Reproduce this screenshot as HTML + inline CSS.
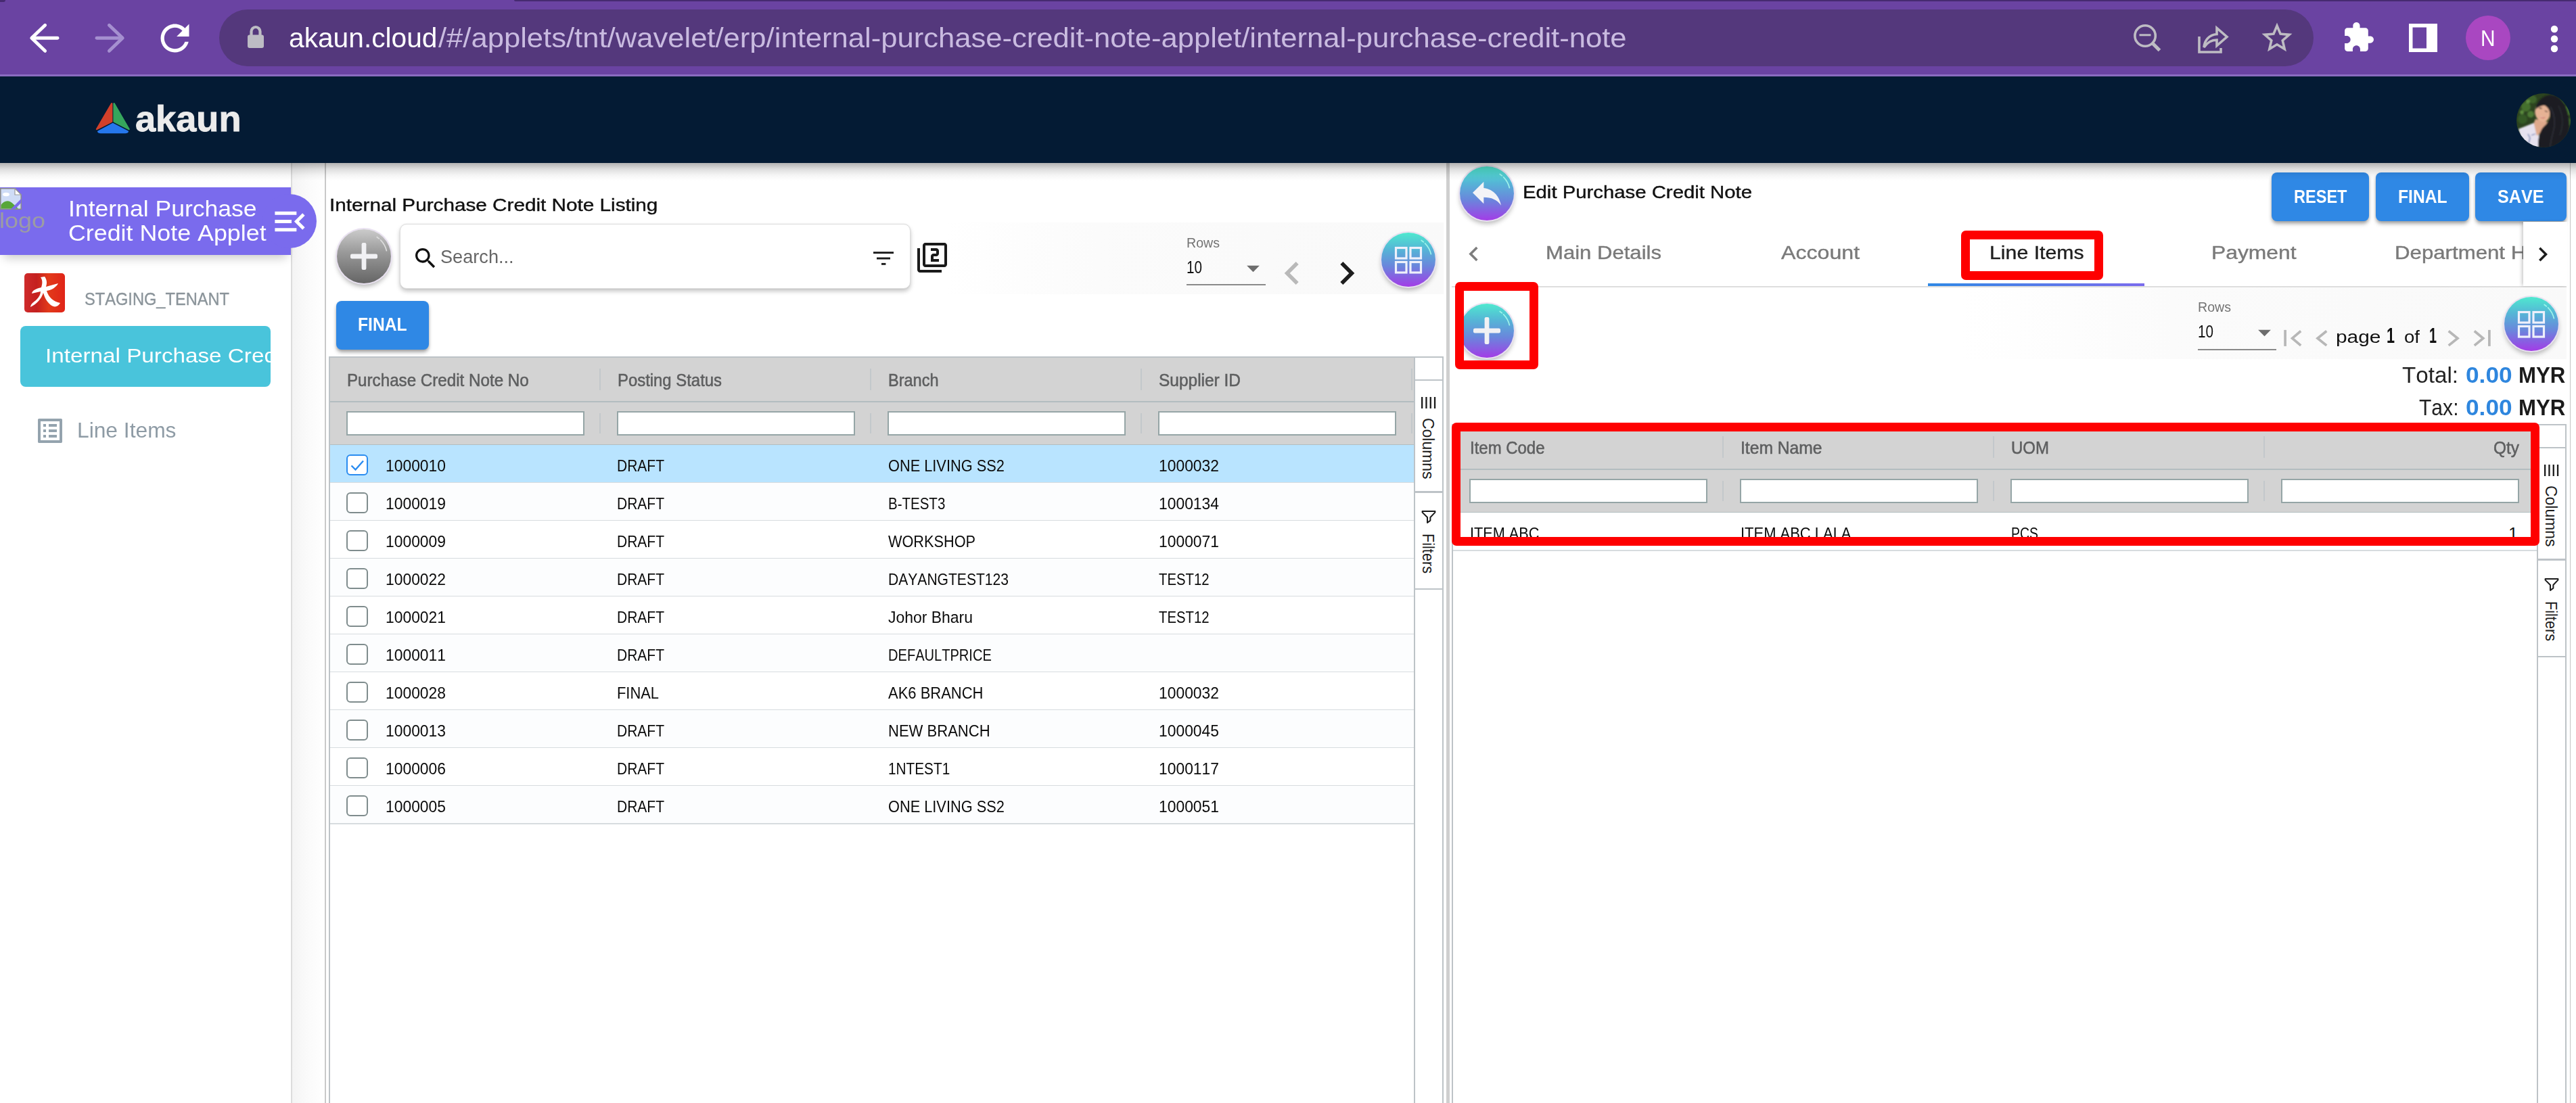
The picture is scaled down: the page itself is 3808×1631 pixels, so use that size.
<!DOCTYPE html>
<html lang="en">
<head>
<meta charset="utf-8">
<title>Internal Purchase Credit Note Applet</title>
<style>
html,body{margin:0;padding:0;background:#fff;}
body{width:3808px;height:1631px;overflow:hidden;font-family:"Liberation Sans",sans-serif;}
#root{position:relative;width:3808px;height:1631px;overflow:hidden;background:#fff;}
#root div,#root svg,#root span.t{position:absolute;box-sizing:border-box;}
span.t{white-space:nowrap;line-height:normal;font-kerning:none;}
.btn{background:#2f88e5;border-radius:8px;box-shadow:0 5px 6px -1px rgba(0,0,0,.28),0 2px 4px rgba(0,0,0,.18);}
.fab{border-radius:50%;background:linear-gradient(180deg,#4fe9cf 0%,#55b6d6 30%,#6a86dc 62%,#a33ce7 100%);box-shadow:0 0 0 2px #e9e1f1,0 5px 7px rgba(0,0,0,.28);}
.fabg{border-radius:50%;background:linear-gradient(180deg,#cbcbcb 0%,#9a9a9a 42%,#656565 100%);box-shadow:0 0 0 2px #e9e1f1,0 5px 7px rgba(0,0,0,.28);}
.hdr{background:#d3d3d3;}
.fin{background:#fff;border:2px solid #95a5a6;}
.cb{border:2px solid #7f8c8d;border-radius:6px;background:#fff;}
.ln{background:#d7dcdf;}
.red{border:13px solid #fe0000;border-radius:7px;}
</style>
</head>
<body>
<div id="root">
<div style="left:0px;top:0px;width:3808px;height:113px;background:#6a43a2;"></div>
<div style="left:760px;top:0px;width:3048px;height:2px;background:#462a70;border-radius:0 0 0 3px;"></div>
<div style="left:0px;top:0px;width:8px;height:3px;background:#462a70;border-radius:0 0 8px 0;"></div>
<div style="left:0px;top:110px;width:3808px;height:3px;background:#8b6cc1;"></div>
<div style="left:324px;top:14px;width:3096px;height:84px;background:#54387c;border-radius:42px;"></div>
<svg style="left:40px;top:30px;" width="52" height="52" viewBox="0 0 52 52"><g fill="none" stroke="#fff" stroke-width="4.900" stroke-linecap="round" stroke-linejoin="round"><path d="M7.600 26.300H45"/><path d="M26.600 7.300L6.800 26.300L26.600 45.300"/></g></svg>
<svg style="left:136px;top:30px;" width="52" height="52" viewBox="0 0 52 52"><g fill="none" stroke="#a58fd0" stroke-width="4.900" stroke-linecap="round" stroke-linejoin="round"><path d="M7 26.300H44.400"/><path d="M25.400 7.300L45.200 26.300L25.400 45.300"/></g></svg>
<svg style="left:227.0px;top:24.5px;" width="63" height="63" viewBox="0 0 24 24"><path d="M17.65 6.35C16.2 4.9 14.21 4 12 4c-4.42 0-7.99 3.58-7.99 8s3.57 8 7.99 8c3.73 0 6.84-2.55 7.73-6h-2.08c-.82 2.33-3.04 4-5.65 4-3.31 0-6-2.69-6-6s2.69-6 6-6c1.66 0 3.14.69 4.22 1.78L13 11h7V4l-2.35 2.35z" fill="#fff" /></svg>
<svg style="left:362px;top:34px;" width="32" height="40" viewBox="0 0 32 40"><path d="M9.5 19V12.5a6.5 6.5 0 0 1 13 0V19" fill="none" stroke="#bdbcc4" stroke-width="4.2"/><rect x="4" y="17.5" width="24" height="19.5" rx="3" fill="#bdbcc4"/></svg>
<span id="url1" class="t" style="font-size:41.5px;color:#fff;font-weight:400;left:427px;top:31.96px;transform-origin:0 50%;transform:scaleX(0.9807);">akaun.cloud</span>
<span id="url2" class="t" style="font-size:41.5px;color:#c9bbe0;font-weight:400;left:647.5px;top:31.96px;transform-origin:0 50%;transform:scaleX(1.0503);">/#/applets/tnt/wavelet/erp/internal-purchase-credit-note-applet/internal-purchase-credit-note</span>
<svg style="left:3150px;top:32px;" width="48" height="48" viewBox="0 0 48 48"><g fill="none" stroke="#bebcc3"><circle cx="21.100" cy="21" r="15.200" stroke-width="3.600"/><path d="M32.500 32.500L42.500 42.500" stroke-width="5.200"/><path d="M12.500 19.800H29.500" stroke-width="3"/></g></svg>
<svg style="left:3246px;top:32px;" width="52" height="48" viewBox="0 0 52 48"><path d="M5 22V45H37V39" fill="none" stroke="#bebcc3" stroke-width="3.6"/><path d="M12 38C13 27 20 19.5 31 18.5V9.5L46 22.5 31 35.5V27C23 27 17 30.5 12 38Z" fill="none" stroke="#bebcc3" stroke-width="3.6" stroke-linejoin="miter"/></svg>
<svg style="left:3338.5px;top:29.0px;" width="54" height="54" viewBox="0 0 24 24"><path d="M22 9.24l-7.19-.62L12 2 9.19 8.63 2 9.24l5.46 4.73L5.82 21 12 17.27 18.18 21l-1.63-7.03L22 9.24zM12 15.4l-3.76 2.27 1-4.28-3.32-2.88 4.38-.38L12 6.1l1.71 4.04 4.38.38-3.32 2.88 1 4.28L12 15.4z" fill="#bebcc3" /></svg>
<svg style="left:3462.0px;top:30.5px;" width="49" height="49" viewBox="0 0 24 24"><path d="M20.5 11H19V7c0-1.1-.9-2-2-2h-4V3.5C13 2.12 11.88 1 10.5 1S8 2.12 8 3.5V5H4c-1.1 0-1.99.9-1.99 2v3.8H3.5c1.49 0 2.7 1.21 2.7 2.7s-1.21 2.7-2.7 2.7H2V20c0 1.1.9 2 2 2h3.8v-1.5c0-1.49 1.21-2.7 2.7-2.7 1.49 0 2.7 1.21 2.7 2.7V22H17c1.1 0 2-.9 2-2v-4h1.5c1.38 0 2.5-1.12 2.5-2.5S21.88 11 20.5 11z" fill="#fff" /></svg>
<svg style="left:3560px;top:34px;" width="44" height="44" viewBox="0 0 44 44"><path d="M1 1H43V43H1Z M6.500 6.500V37.500H27V6.500Z" fill="#fff" fill-rule="evenodd"/></svg>
<div style="left:3645px;top:23px;width:66px;height:66px;background:#a947c1;border-radius:50%;"></div>
<span id="navN" class="t" style="font-size:33px;color:#fff;font-weight:400;left:3667px;top:37.59px;transform-origin:0 50%;transform:scaleX(0.9059);">N</span>
<svg style="left:3768px;top:36px;" width="16" height="44" viewBox="0 0 16 44"><circle cx="8" cy="7" r="5.200" fill="#fff"/><circle cx="8" cy="21.500" r="5.200" fill="#fff"/><circle cx="8" cy="36" r="5.200" fill="#fff"/></svg>
<div style="left:430px;top:241px;width:51px;height:1390px;background:linear-gradient(90deg,#f3f3f3 0%,#fafafa 45%,#ffffff 100%);"></div>
<div style="left:430px;top:241px;width:1.5px;height:1390px;background:#dcdcdc;"></div>
<div style="left:480px;top:241px;width:2px;height:1390px;background:#c9c9c9;"></div>
<div style="left:0px;top:277px;width:430px;height:100px;background:#7a6bed;box-shadow:0 10px 14px -6px rgba(0,0,0,.22);"></div>
<div style="left:388px;top:287px;width:80px;height:80px;background:#7a6bed;border-radius:50%;"></div>
<svg style="left:0px;top:277.5px;" width="32" height="32" viewBox="0 0 32 32"><path d="M0.800 0.800H22L31.200 10V31.200H0.800Z" fill="#cfdcf6" stroke="#8b8b8b" stroke-width="1.6"/><path d="M22 0.800V10H31.200Z" fill="#fff" stroke="#9a9a9a" stroke-width="1.200"/><ellipse cx="9" cy="9.500" rx="5" ry="2.800" fill="#fff"/><path d="M1.600 30.400V25C6 18 14 17 20 24L27 30.400Z" fill="#57a639"/><path d="M31.200 16L16 31.200H22L31.200 22Z" fill="#7a6bed"/></svg>
<span id="logo" class="t" style="font-size:31.5px;color:#9c9ca3;font-weight:400;left:-1px;top:308.47px;transform-origin:0 50%;transform:scaleX(1.1417);">logo</span>
<span id="ban1" class="t" style="font-size:33px;color:#fff;font-weight:400;left:100.6px;top:289.59px;transform-origin:0 50%;transform:scaleX(1.0771);">Internal Purchase</span>
<span id="ban2" class="t" style="font-size:33px;color:#fff;font-weight:400;left:100.6px;top:325.59px;transform-origin:0 50%;transform:scaleX(1.0851);">Credit Note Applet</span>
<svg style="left:398.5px;top:298.2px;" width="59" height="59" viewBox="0 0 24 24"><path d="M3 18h13v-2H3v2zm0-5h10v-2H3v2zm0-7v2h13V6H3zm18 9.59L17.42 12 21 8.41 19.59 7l-5 5 5 5L21 15.59z" fill="#fff" /></svg>
<svg style="left:36px;top:404px;" width="60" height="58" viewBox="0 0 60 58"><defs><linearGradient id="tg" x1="0" x2="1" y1="0" y2="0"><stop offset="0" stop-color="#cf2b2b"/><stop offset="0.300" stop-color="#c4201f"/><stop offset="0.600" stop-color="#e23a1a"/><stop offset="1" stop-color="#e02418"/></linearGradient></defs><rect x="0" y="0" width="60" height="58" rx="5" fill="url(#tg)"/><path d="M30 5C33 9 34 14 32 20L50 15C47 21 40 25 33 26C36 36 43 42 53 44C50 50 44 51 39 47C33 42 30 36 28 29C25 38 19 45 9 50C10 44 14 43 18 39C22 35 24 31 24 27L11 30C12 25 17 23 25 21C27 15 27 10 24 6Z" fill="#fff"/></svg>
<span id="tenant" class="t" style="font-size:25.5px;color:#8b949a;font-weight:400;-webkit-text-stroke:0.35px #8b949a;left:124.5px;top:427.5px;transform-origin:0 50%;transform:scaleX(0.9266);">STAGING_TENANT</span>
<div style="left:30px;top:482px;width:370px;height:90px;overflow:hidden;border-radius:8px;background:#49c4db;">
<span id="menu1" class="t" style="font-size:29.5px;color:#fff;font-weight:400;left:36.6px;top:27.22px;transform-origin:0 50%;transform:scaleX(1.1271);">Internal Purchase Credit Note</span>
</div>
<svg style="left:50.0px;top:612.8px;" width="48" height="48" viewBox="0 0 24 24"><path d="M19 5v14H5V5h14m1.1-2H3.9c-.5 0-.9.4-.9.9v16.2c0 .4.4.9.9.9h16.2c.4 0 .9-.5.9-.9V3.9c0-.5-.5-.9-.9-.9zM11 7h6v2h-6V7zm0 4h6v2h-6v-2zm0 4h6v2h-6zM7 7h2v2H7zm0 4h2v2H7zm0 4h2v2H7z" fill="#94a3ae" /></svg>
<span id="menu2" class="t" style="font-size:30.5px;color:#8e9ba5;font-weight:400;left:114px;top:619.29px;transform-origin:0 50%;transform:scaleX(1.0411);">Line Items</span>
<span id="ttl1" class="t" style="font-size:26px;color:#111;font-weight:400;-webkit-text-stroke:0.4px #111;left:486.8px;top:287.94px;transform-origin:0 50%;transform:scaleX(1.1424);">Internal Purchase Credit Note Listing</span>
<div style="left:1400px;top:329px;width:734px;height:106px;background:linear-gradient(90deg,#ffffff 0%,#fbfbfb 30%,#f9f9f9 100%);"></div>
<div class="fabg" style="left:498px;top:339px;width:80px;height:80px;"></div>
<svg style="left:498px;top:339px;" width="80" height="80" viewBox="0 0 80 80"><rect x="20" y="36.600" width="40" height="6.800" rx="2.200" fill="#f1f1f4"/><rect x="36.600" y="20" width="6.800" height="40" rx="2.200" fill="#f1f1f4"/><path d="M59.200 11.500A34.400 34.400 0 0 1 73.400 31.700" fill="none" stroke="#dcdcdc" stroke-width="1.700" stroke-linecap="round" stroke-dasharray="4 3 100"/></svg>
<div style="left:591px;top:330.5px;width:755px;height:96.5px;background:#fff;border:1.5px solid #dedede;border-radius:10px;box-shadow:0 4px 6px rgba(0,0,0,.22),0 0 2px rgba(0,0,0,.10);"></div>
<svg style="left:608.5px;top:362.3px;" width="40" height="40" viewBox="0 0 24 24"><path d="M15.5 14h-.79l-.28-.27C15.41 12.59 16 11.11 16 9.5 16 5.91 13.09 3 9.5 3S3 5.91 3 9.5 5.91 16 9.5 16c1.61 0 3.09-.59 4.23-1.57l.27.28v.79l5 4.99L20.49 19l-4.99-5zm-6 0C7.01 14 5 11.99 5 9.5S7.01 5 9.5 5 14 7.01 14 9.5 11.99 14 9.5 14z" fill="#111" /></svg>
<span id="srch" class="t" style="font-size:27.5px;color:#666;font-weight:400;left:651px;top:363.86px;transform-origin:0 50%;transform:scaleX(0.9867);">Search...</span>
<svg style="left:1291px;top:371px;" width="31" height="22" viewBox="0 0 31 22"><g fill="#1a1a1a"><rect x="0" y="1.200" width="30" height="2.900"/><rect x="5" y="9.600" width="20" height="2.900"/><rect x="12" y="17.900" width="6.400" height="2.900"/></g></svg>
<svg style="left:1354.0px;top:357.0px;" width="48" height="48" viewBox="0 0 24 24"><path d="M3 5H1v16c0 1.1.9 2 2 2h16v-2H3V5zm18-4H7c-1.1 0-2 .9-2 2v14c0 1.1.9 2 2 2h14c1.1 0 2-.9 2-2V3c0-1.1-.9-2-2-2zm0 16H7V3h14v14zm-4-4h-4v-2h2c1.1 0 2-.89 2-2V7c0-1.11-.9-2-2-2h-4v2h4v2h-2c-1.1 0-2 .89-2 2v4h6v-2z" fill="#1a1a1a" /></svg>
<span id="rows1" class="t" style="font-size:20px;color:#737373;font-weight:400;left:1754.4px;top:347.87px;transform-origin:0 50%;transform:scaleX(0.9797);">Rows</span>
<span id="ten1" class="t" style="font-size:26px;color:#111;font-weight:400;left:1754.4px;top:380.04px;transform-origin:0 50%;transform:scaleX(0.7952);">10</span>
<svg style="left:1829.8px;top:373.5px;" width="45" height="45" viewBox="0 0 24 24"><path d="M7 10l5 5 5-5z" fill="#6d6d6d" /></svg>
<div style="left:1754px;top:420px;width:116.5px;height:2px;background:#8a8a8a;"></div>
<svg style="left:1875.5px;top:370.0px;" width="68" height="68" viewBox="0 0 24 24"><path d="M15.41 7.41L14 6l-6 6 6 6 1.41-1.41L10.83 12z" fill="#b9b9b9" /></svg>
<svg style="left:1956.5px;top:370.0px;" width="68" height="68" viewBox="0 0 24 24"><path d="M10 6L8.59 7.41 13.17 12l-4.58 4.59L10 18l6-6z" fill="#1d1d1d" /></svg>
<div class="fab" style="left:2042px;top:344px;width:80px;height:80px;"></div>
<svg style="left:2042px;top:344px;" width="80" height="80" viewBox="0 0 80 80"><g fill="none" stroke="#eef0fb" stroke-width="3.200"><rect x="21.500" y="22.500" width="15.500" height="15.500"/><rect x="43" y="22.500" width="15.500" height="15.500"/><rect x="21.500" y="43.500" width="15.500" height="15.500"/><rect x="43" y="43.500" width="15.500" height="15.500"/></g><path d="M59.200 11.500A34.400 34.400 0 0 1 73.400 31.700" fill="none" stroke="#9ff3ea" stroke-width="1.700" stroke-linecap="round" stroke-dasharray="4 3 100"/></svg>
<div class="btn" style="left:496.5px;top:445px;width:137.5px;height:71.5px;"></div>
<span id="fin1" class="t" style="font-size:27.5px;color:#fff;font-weight:700;left:529px;top:464.46px;transform-origin:0 50%;transform:scaleX(0.8966);">FINAL</span>
<div style="left:486px;top:527px;width:1647.5px;height:1110px;border:2px solid #bdc3c7;background:#fff;"></div>
<div class="hdr" style="left:488px;top:529px;width:1602px;height:129px;"></div>
<div style="left:488px;top:592.5px;width:1602px;height:2px;background:#b3bdc0;"></div>
<div style="left:488px;top:656.5px;width:1602px;height:2px;background:#b3bdc0;"></div>
<span id="h1_0" class="t" style="font-size:25px;color:#5e5f60;font-weight:400;-webkit-text-stroke:0.55px #5e5f60;left:512.6px;top:547.96px;transform-origin:0 50%;transform:scaleX(0.9669);">Purchase Credit Note No</span>
<div class="fin" style="left:512px;top:608px;width:352px;height:35.5px;"></div>
<div style="left:886px;top:545px;width:2px;height:32px;background:#c3c8cb;"></div>
<div style="left:886px;top:611px;width:2px;height:30px;background:#c3c8cb;"></div>
<span id="h1_1" class="t" style="font-size:25px;color:#5e5f60;font-weight:400;-webkit-text-stroke:0.55px #5e5f60;left:912.6px;top:547.96px;transform-origin:0 50%;transform:scaleX(0.9552);">Posting Status</span>
<div class="fin" style="left:912px;top:608px;width:352px;height:35.5px;"></div>
<div style="left:1286px;top:545px;width:2px;height:32px;background:#c3c8cb;"></div>
<div style="left:1286px;top:611px;width:2px;height:30px;background:#c3c8cb;"></div>
<span id="h1_2" class="t" style="font-size:25px;color:#5e5f60;font-weight:400;-webkit-text-stroke:0.55px #5e5f60;left:1312.6px;top:547.96px;transform-origin:0 50%;transform:scaleX(0.9404);">Branch</span>
<div class="fin" style="left:1312px;top:608px;width:352px;height:35.5px;"></div>
<div style="left:1686px;top:545px;width:2px;height:32px;background:#c3c8cb;"></div>
<div style="left:1686px;top:611px;width:2px;height:30px;background:#c3c8cb;"></div>
<span id="h1_3" class="t" style="font-size:25px;color:#5e5f60;font-weight:400;-webkit-text-stroke:0.55px #5e5f60;left:1712.6px;top:547.96px;transform-origin:0 50%;transform:scaleX(0.9784);">Supplier ID</span>
<div class="fin" style="left:1712px;top:608px;width:352px;height:35.5px;"></div>
<div style="left:2086px;top:545px;width:2px;height:32px;background:#c3c8cb;"></div>
<div style="left:2086px;top:611px;width:2px;height:30px;background:#c3c8cb;"></div>
<div style="left:488px;top:658px;width:1602px;height:56px;background:#b9e4ff;"></div>
<div class="ln" style="left:488px;top:713px;width:1602px;height:2px;"></div>
<div style="left:512px;top:671.5px;width:32px;height:31.5px;border:2px solid #2a8cf0;border-radius:6px;background:#fff;"></div>
<svg style="left:512px;top:671.5px;" width="32" height="32" viewBox="0 0 32 32"><path d="M7.500 16.500L13.500 22.500L25 9.500" fill="none" stroke="#2a8cf0" stroke-width="2.400"/></svg>
<span id="r0a" class="t" style="font-size:24.5px;color:#0b0b0b;font-weight:400;left:569.5px;top:674.62px;transform-origin:0 50%;transform:scaleX(0.9330);">1000010</span>
<span id="r0b" class="t" style="font-size:24.5px;color:#0b0b0b;font-weight:400;left:912.4px;top:674.62px;transform-origin:0 50%;transform:scaleX(0.8571);">DRAFT</span>
<span id="r0c" class="t" style="font-size:24.5px;color:#0b0b0b;font-weight:400;left:1312.7px;top:674.62px;transform-origin:0 50%;transform:scaleX(0.8885);">ONE LIVING SS2</span>
<span id="r0d" class="t" style="font-size:24.5px;color:#0b0b0b;font-weight:400;left:1712.7px;top:674.62px;transform-origin:0 50%;transform:scaleX(0.9330);">1000032</span>
<div style="left:488px;top:714px;width:1602px;height:56px;background:#fcfdfe;"></div>
<div class="ln" style="left:488px;top:769px;width:1602px;height:2px;"></div>
<div class="cb" style="left:512px;top:727.5px;width:32px;height:31.5px;"></div>
<span id="r1a" class="t" style="font-size:24.5px;color:#0b0b0b;font-weight:400;left:569.5px;top:730.62px;transform-origin:0 50%;transform:scaleX(0.9330);">1000019</span>
<span id="r1b" class="t" style="font-size:24.5px;color:#0b0b0b;font-weight:400;left:912.4px;top:730.62px;transform-origin:0 50%;transform:scaleX(0.8571);">DRAFT</span>
<span id="r1c" class="t" style="font-size:24.5px;color:#0b0b0b;font-weight:400;left:1312.7px;top:730.62px;transform-origin:0 50%;transform:scaleX(0.8367);">B-TEST3</span>
<span id="r1d" class="t" style="font-size:24.5px;color:#0b0b0b;font-weight:400;left:1712.7px;top:730.62px;transform-origin:0 50%;transform:scaleX(0.9330);">1000134</span>
<div style="left:488px;top:770px;width:1602px;height:56px;background:#ffffff;"></div>
<div class="ln" style="left:488px;top:825px;width:1602px;height:2px;"></div>
<div class="cb" style="left:512px;top:783.5px;width:32px;height:31.5px;"></div>
<span id="r2a" class="t" style="font-size:24.5px;color:#0b0b0b;font-weight:400;left:569.5px;top:786.62px;transform-origin:0 50%;transform:scaleX(0.9330);">1000009</span>
<span id="r2b" class="t" style="font-size:24.5px;color:#0b0b0b;font-weight:400;left:912.4px;top:786.62px;transform-origin:0 50%;transform:scaleX(0.8571);">DRAFT</span>
<span id="r2c" class="t" style="font-size:24.5px;color:#0b0b0b;font-weight:400;left:1312.7px;top:786.62px;transform-origin:0 50%;transform:scaleX(0.8856);">WORKSHOP</span>
<span id="r2d" class="t" style="font-size:24.5px;color:#0b0b0b;font-weight:400;left:1712.7px;top:786.62px;transform-origin:0 50%;transform:scaleX(0.9330);">1000071</span>
<div style="left:488px;top:826px;width:1602px;height:56px;background:#fcfdfe;"></div>
<div class="ln" style="left:488px;top:881px;width:1602px;height:2px;"></div>
<div class="cb" style="left:512px;top:839.5px;width:32px;height:31.5px;"></div>
<span id="r3a" class="t" style="font-size:24.5px;color:#0b0b0b;font-weight:400;left:569.5px;top:842.62px;transform-origin:0 50%;transform:scaleX(0.9330);">1000022</span>
<span id="r3b" class="t" style="font-size:24.5px;color:#0b0b0b;font-weight:400;left:912.4px;top:842.62px;transform-origin:0 50%;transform:scaleX(0.8571);">DRAFT</span>
<span id="r3c" class="t" style="font-size:24.5px;color:#0b0b0b;font-weight:400;left:1312.7px;top:842.62px;transform-origin:0 50%;transform:scaleX(0.8600);">DAYANGTEST123</span>
<span id="r3d" class="t" style="font-size:24.5px;color:#0b0b0b;font-weight:400;left:1712.7px;top:842.62px;transform-origin:0 50%;transform:scaleX(0.8300);">TEST12</span>
<div style="left:488px;top:882px;width:1602px;height:56px;background:#ffffff;"></div>
<div class="ln" style="left:488px;top:937px;width:1602px;height:2px;"></div>
<div class="cb" style="left:512px;top:895.5px;width:32px;height:31.5px;"></div>
<span id="r4a" class="t" style="font-size:24.5px;color:#0b0b0b;font-weight:400;left:569.5px;top:898.62px;transform-origin:0 50%;transform:scaleX(0.9330);">1000021</span>
<span id="r4b" class="t" style="font-size:24.5px;color:#0b0b0b;font-weight:400;left:912.4px;top:898.62px;transform-origin:0 50%;transform:scaleX(0.8571);">DRAFT</span>
<span id="r4c" class="t" style="font-size:24.5px;color:#0b0b0b;font-weight:400;left:1312.7px;top:898.62px;transform-origin:0 50%;transform:scaleX(0.9364);">Johor Bharu</span>
<span id="r4d" class="t" style="font-size:24.5px;color:#0b0b0b;font-weight:400;left:1712.7px;top:898.62px;transform-origin:0 50%;transform:scaleX(0.8300);">TEST12</span>
<div style="left:488px;top:938px;width:1602px;height:56px;background:#fcfdfe;"></div>
<div class="ln" style="left:488px;top:993px;width:1602px;height:2px;"></div>
<div class="cb" style="left:512px;top:951.5px;width:32px;height:31.5px;"></div>
<span id="r5a" class="t" style="font-size:24.5px;color:#0b0b0b;font-weight:400;left:569.5px;top:954.62px;transform-origin:0 50%;transform:scaleX(0.9330);">1000011</span>
<span id="r5b" class="t" style="font-size:24.5px;color:#0b0b0b;font-weight:400;left:912.4px;top:954.62px;transform-origin:0 50%;transform:scaleX(0.8571);">DRAFT</span>
<span id="r5c" class="t" style="font-size:24.5px;color:#0b0b0b;font-weight:400;left:1312.7px;top:954.62px;transform-origin:0 50%;transform:scaleX(0.8192);">DEFAULTPRICE</span>
<div style="left:488px;top:994px;width:1602px;height:56px;background:#ffffff;"></div>
<div class="ln" style="left:488px;top:1049px;width:1602px;height:2px;"></div>
<div class="cb" style="left:512px;top:1007.5px;width:32px;height:31.5px;"></div>
<span id="r6a" class="t" style="font-size:24.5px;color:#0b0b0b;font-weight:400;left:569.5px;top:1010.62px;transform-origin:0 50%;transform:scaleX(0.9330);">1000028</span>
<span id="r6b" class="t" style="font-size:24.5px;color:#0b0b0b;font-weight:400;left:912.4px;top:1010.62px;transform-origin:0 50%;transform:scaleX(0.8929);">FINAL</span>
<span id="r6c" class="t" style="font-size:24.5px;color:#0b0b0b;font-weight:400;left:1312.7px;top:1010.62px;transform-origin:0 50%;transform:scaleX(0.8973);">AK6 BRANCH</span>
<span id="r6d" class="t" style="font-size:24.5px;color:#0b0b0b;font-weight:400;left:1712.7px;top:1010.62px;transform-origin:0 50%;transform:scaleX(0.9330);">1000032</span>
<div style="left:488px;top:1050px;width:1602px;height:56px;background:#fcfdfe;"></div>
<div class="ln" style="left:488px;top:1105px;width:1602px;height:2px;"></div>
<div class="cb" style="left:512px;top:1063.5px;width:32px;height:31.5px;"></div>
<span id="r7a" class="t" style="font-size:24.5px;color:#0b0b0b;font-weight:400;left:569.5px;top:1066.62px;transform-origin:0 50%;transform:scaleX(0.9330);">1000013</span>
<span id="r7b" class="t" style="font-size:24.5px;color:#0b0b0b;font-weight:400;left:912.4px;top:1066.62px;transform-origin:0 50%;transform:scaleX(0.8571);">DRAFT</span>
<span id="r7c" class="t" style="font-size:24.5px;color:#0b0b0b;font-weight:400;left:1312.7px;top:1066.62px;transform-origin:0 50%;transform:scaleX(0.8995);">NEW BRANCH</span>
<span id="r7d" class="t" style="font-size:24.5px;color:#0b0b0b;font-weight:400;left:1712.7px;top:1066.62px;transform-origin:0 50%;transform:scaleX(0.9330);">1000045</span>
<div style="left:488px;top:1106px;width:1602px;height:56px;background:#ffffff;"></div>
<div class="ln" style="left:488px;top:1161px;width:1602px;height:2px;"></div>
<div class="cb" style="left:512px;top:1119.5px;width:32px;height:31.5px;"></div>
<span id="r8a" class="t" style="font-size:24.5px;color:#0b0b0b;font-weight:400;left:569.5px;top:1122.62px;transform-origin:0 50%;transform:scaleX(0.9330);">1000006</span>
<span id="r8b" class="t" style="font-size:24.5px;color:#0b0b0b;font-weight:400;left:912.4px;top:1122.62px;transform-origin:0 50%;transform:scaleX(0.8571);">DRAFT</span>
<span id="r8c" class="t" style="font-size:24.5px;color:#0b0b0b;font-weight:400;left:1312.7px;top:1122.62px;transform-origin:0 50%;transform:scaleX(0.8479);">1NTEST1</span>
<span id="r8d" class="t" style="font-size:24.5px;color:#0b0b0b;font-weight:400;left:1712.7px;top:1122.62px;transform-origin:0 50%;transform:scaleX(0.9330);">1000117</span>
<div style="left:488px;top:1162px;width:1602px;height:56px;background:#fcfdfe;"></div>
<div class="ln" style="left:488px;top:1217px;width:1602px;height:2px;"></div>
<div class="cb" style="left:512px;top:1175.5px;width:32px;height:31.5px;"></div>
<span id="r9a" class="t" style="font-size:24.5px;color:#0b0b0b;font-weight:400;left:569.5px;top:1178.62px;transform-origin:0 50%;transform:scaleX(0.9330);">1000005</span>
<span id="r9b" class="t" style="font-size:24.5px;color:#0b0b0b;font-weight:400;left:912.4px;top:1178.62px;transform-origin:0 50%;transform:scaleX(0.8571);">DRAFT</span>
<span id="r9c" class="t" style="font-size:24.5px;color:#0b0b0b;font-weight:400;left:1312.7px;top:1178.62px;transform-origin:0 50%;transform:scaleX(0.8885);">ONE LIVING SS2</span>
<span id="r9d" class="t" style="font-size:24.5px;color:#0b0b0b;font-weight:400;left:1712.7px;top:1178.62px;transform-origin:0 50%;transform:scaleX(0.9330);">1000051</span>
<div style="left:2090px;top:528px;width:2px;height:1103px;background:#bdc3c7;"></div>
<div style="left:2092px;top:561px;width:40px;height:2px;background:#bdc3c7;"></div>
<div style="left:2092px;top:726px;width:40px;height:3px;background:#bdc3c7;"></div>
<div style="left:2092px;top:870px;width:40px;height:2px;background:#bdc3c7;"></div>
<svg style="left:2101px;top:587px;" width="22" height="18" viewBox="0 0 22 18"><g fill="#1b1b1b"><rect x="0" y="0" width="2.300" height="17"/><rect x="6.300" y="0" width="2.300" height="17"/><rect x="12.600" y="0" width="2.300" height="17"/><rect x="18.900" y="0" width="2.300" height="17"/></g></svg>
<svg style="left:2101px;top:754px;" width="22" height="21" viewBox="0 0 22 21"><path d="M1.600 2H20.400V3.600L13.400 11V15.600L9 19V11L1.600 3.600Z" fill="none" stroke="#1b1b1b" stroke-width="2" stroke-linejoin="round"/></svg>
<span id="sc1" class="t" style="font-size:24.4px;color:#1b1b1b;font-weight:400;left:2096px;top:618px;transform-origin:0 0;transform:translate(28.5px,0) rotate(90deg) scaleX(0.9413);">Columns</span>
<span id="sf1" class="t" style="font-size:24.4px;color:#1b1b1b;font-weight:400;left:2096px;top:789px;transform-origin:0 0;transform:translate(28.5px,0) rotate(90deg) scaleX(0.8885);">Filters</span>
<div style="left:2137.5px;top:241px;width:5px;height:1390px;background:#cfcfcf;"></div>
<div class="fab" style="left:2158px;top:245.5px;width:80px;height:80px;"></div>
<svg style="left:2170.0px;top:256.5px;" width="56" height="56" viewBox="0 0 24 24"><path d="M10 9V5l-7 7 7 7v-4.1c5 0 8.5 1.6 11 5.1-1-5-4-10-11-11z" fill="#f3f3f7" /></svg>
<svg style="left:2158px;top:245.5px;" width="80" height="80" viewBox="0 0 80 80"><path d="M59.200 11.500A34.400 34.400 0 0 1 73.400 31.700" fill="none" stroke="#9ff3ea" stroke-width="1.700" stroke-linecap="round" stroke-dasharray="4 3 100"/></svg>
<span id="ttl2" class="t" style="font-size:26px;color:#111;font-weight:400;-webkit-text-stroke:0.4px #111;left:2250.7px;top:268.74px;transform-origin:0 50%;transform:scaleX(1.1278);">Edit Purchase Credit Note</span>
<div class="btn" style="left:3358px;top:255px;width:144px;height:72px;"></div>
<div class="btn" style="left:3512px;top:255px;width:138px;height:72px;"></div>
<div class="btn" style="left:3659px;top:255px;width:135px;height:72px;"></div>
<span id="bReset" class="t" style="font-size:27.5px;color:#fff;font-weight:700;left:3390.5px;top:274.66px;transform-origin:0 50%;transform:scaleX(0.8562);">RESET</span>
<span id="bFinal" class="t" style="font-size:27.5px;color:#fff;font-weight:700;left:3544.5px;top:274.66px;transform-origin:0 50%;transform:scaleX(0.8966);">FINAL</span>
<span id="bSave" class="t" style="font-size:27.5px;color:#fff;font-weight:700;left:3691.5px;top:274.66px;transform-origin:0 50%;transform:scaleX(0.9147);">SAVE</span>
<div style="left:2146px;top:422.5px;width:1648px;height:2px;background:#dedede;"></div>
<svg style="left:2157.0px;top:353.7px;" width="43" height="43" viewBox="0 0 24 24"><path d="M15.41 7.41L14 6l-6 6 6 6 1.41-1.41L10.83 12z" fill="#7d7d7d" /></svg>
<span id="tab1" class="t" style="font-size:27.5px;color:#7a7a7a;font-weight:400;-webkit-text-stroke:0.4px #7a7a7a;left:2284.7px;top:358.16px;transform-origin:0 50%;transform:scaleX(1.1301);">Main Details</span>
<span id="tab2" class="t" style="font-size:27.5px;color:#7a7a7a;font-weight:400;-webkit-text-stroke:0.4px #7a7a7a;left:2632.5px;top:358.16px;transform-origin:0 50%;transform:scaleX(1.1693);">Account</span>
<span id="tab3" class="t" style="font-size:27.5px;color:#1f1f1f;font-weight:400;-webkit-text-stroke:0.35px #1f1f1f;left:2941px;top:358.16px;transform-origin:0 50%;transform:scaleX(1.1011);">Line Items</span>
<span id="tab4" class="t" style="font-size:27.5px;color:#7a7a7a;font-weight:400;-webkit-text-stroke:0.4px #7a7a7a;left:3268.5px;top:358.16px;transform-origin:0 50%;transform:scaleX(1.1564);">Payment</span>
<div style="left:3490px;top:330px;width:240px;height:90px;overflow:hidden;">
<span id="tab5" class="t" style="font-size:27.5px;color:#7a7a7a;font-weight:400;-webkit-text-stroke:0.4px #7a7a7a;left:50px;top:28.16px;transform-origin:0 50%;transform:scaleX(1.1347);">Department Hdr</span>
</div>
<div style="left:2850px;top:418.8px;width:320px;height:4.1px;background:linear-gradient(90deg,#2f88e5 0%,#5b78ea 60%,#7a6bed 100%);"></div>
<div style="left:3729.5px;top:328px;width:65px;height:95px;background:#fff;box-shadow:-3px 0 5px -1px rgba(0,0,0,.22);"></div>
<svg style="left:3738.0px;top:354.5px;" width="42" height="42" viewBox="0 0 24 24"><path d="M10 6L8.59 7.41 13.17 12l-4.58 4.59L10 18l6-6z" fill="#1d1d1d" /></svg>
<div class="red" style="left:2899px;top:341px;width:210px;height:72.8px;"></div>
<div style="left:2900px;top:425px;width:894px;height:106px;background:linear-gradient(90deg,#ffffff 0%,#fbfbfb 35%,#f9f9f9 100%);"></div>
<div class="fab" style="left:2158px;top:449px;width:80px;height:80px;"></div>
<svg style="left:2158px;top:449px;" width="80" height="80" viewBox="0 0 80 80"><rect x="20" y="36.600" width="40" height="6.800" rx="2.200" fill="#f1f1f4"/><rect x="36.600" y="20" width="6.800" height="40" rx="2.200" fill="#f1f1f4"/><path d="M59.200 11.500A34.400 34.400 0 0 1 73.400 31.700" fill="none" stroke="#9ff3ea" stroke-width="1.700" stroke-linecap="round" stroke-dasharray="4 3 100"/></svg>
<div class="red" style="left:2151px;top:417px;width:123px;height:129px;"></div>
<span id="rows2" class="t" style="font-size:20px;color:#737373;font-weight:400;left:3249.4px;top:442.87px;transform-origin:0 50%;transform:scaleX(0.9797);">Rows</span>
<span id="ten2" class="t" style="font-size:26px;color:#111;font-weight:400;left:3249.4px;top:475.04px;transform-origin:0 50%;transform:scaleX(0.7952);">10</span>
<svg style="left:3324.8px;top:469.0px;" width="45" height="45" viewBox="0 0 24 24"><path d="M7 10l5 5 5-5z" fill="#6d6d6d" /></svg>
<div style="left:3249px;top:515.5px;width:116px;height:2px;background:#8a8a8a;"></div>
<svg style="left:3372px;top:484px;" width="320" height="32" viewBox="0 0 320 32"><g fill="none" stroke="#b7b7b7" stroke-width="3.700"><path d="M6.100 3.900V27.900"/><path d="M29.200 5.500L16.600 16.200L29.200 26.900"/><path d="M67.300 5.500L54 16.200L67.300 26.900"/><path d="M247.700 5.500L261 16.200L247.700 26.900"/><path d="M285.800 5.500L298.800 16.200L285.800 26.900"/><path d="M307.900 3.900V27.900"/></g></svg>
<span id="pg1" class="t" style="font-size:26.5px;color:#111;font-weight:400;left:3453.4px;top:482.88px;transform-origin:0 50%;transform:scaleX(1.1280);">page</span>
<span id="pg2" class="t" style="font-size:31px;color:#111;font-weight:700;left:3528px;top:478.73px;transform-origin:0 50%;transform:scaleX(0.6957);">1</span>
<span id="pg3" class="t" style="font-size:26.5px;color:#111;font-weight:400;left:3554px;top:482.88px;transform-origin:0 50%;transform:scaleX(1.0403);">of</span>
<span id="pg4" class="t" style="font-size:31px;color:#111;font-weight:700;left:3590.5px;top:478.73px;transform-origin:0 50%;transform:scaleX(0.6377);">1</span>
<div class="fab" style="left:3702px;top:439px;width:80px;height:80px;"></div>
<svg style="left:3702px;top:439px;" width="80" height="80" viewBox="0 0 80 80"><g fill="none" stroke="#eef0fb" stroke-width="3.200"><rect x="21.500" y="22.500" width="15.500" height="15.500"/><rect x="43" y="22.500" width="15.500" height="15.500"/><rect x="21.500" y="43.500" width="15.500" height="15.500"/><rect x="43" y="43.500" width="15.500" height="15.500"/></g><path d="M59.200 11.500A34.400 34.400 0 0 1 73.400 31.700" fill="none" stroke="#9ff3ea" stroke-width="1.700" stroke-linecap="round" stroke-dasharray="4 3 100"/></svg>
<span id="tot1" class="t" style="font-size:33px;color:#222;font-weight:400;left:3551px;top:535.59px;transform-origin:0 50%;transform:scaleX(1.0055);">Total:</span>
<span id="tot2" class="t" style="font-size:33px;color:#2e86de;font-weight:700;left:3645px;top:535.59px;transform-origin:0 50%;transform:scaleX(1.0680);">0.00</span>
<span id="tot3" class="t" style="font-size:33px;color:#1b1b1b;font-weight:700;left:3722.7px;top:535.59px;transform-origin:0 50%;transform:scaleX(0.9449);">MYR</span>
<span id="tax1" class="t" style="font-size:33px;color:#222;font-weight:400;left:3575.5px;top:583.59px;transform-origin:0 50%;transform:scaleX(0.9114);">Tax:</span>
<span id="tax2" class="t" style="font-size:33px;color:#2e86de;font-weight:700;left:3645px;top:583.59px;transform-origin:0 50%;transform:scaleX(1.0680);">0.00</span>
<span id="tax3" class="t" style="font-size:33px;color:#1b1b1b;font-weight:700;left:3722.7px;top:583.59px;transform-origin:0 50%;transform:scaleX(0.9449);">MYR</span>
<div style="left:2146px;top:627px;width:1647.5px;height:1010px;border:2px solid #bdc3c7;background:#fff;"></div>
<div class="hdr" style="left:2148px;top:629px;width:1602px;height:129px;"></div>
<div style="left:2148px;top:692.5px;width:1602px;height:2px;background:#b3bdc0;"></div>
<div style="left:2148px;top:756.5px;width:1602px;height:2px;background:#b3bdc0;"></div>
<span id="h2_0" class="t" style="font-size:25px;color:#5e5f60;font-weight:400;-webkit-text-stroke:0.55px #5e5f60;left:2172.6px;top:647.96px;transform-origin:0 50%;transform:scaleX(0.9580);">Item Code</span>
<div class="fin" style="left:2172px;top:708px;width:352px;height:35.5px;"></div>
<div style="left:2546px;top:645px;width:2px;height:32px;background:#c3c8cb;"></div>
<div style="left:2546px;top:711px;width:2px;height:30px;background:#c3c8cb;"></div>
<span id="h2_1" class="t" style="font-size:25px;color:#5e5f60;font-weight:400;-webkit-text-stroke:0.55px #5e5f60;left:2572.6px;top:647.96px;transform-origin:0 50%;transform:scaleX(0.9856);">Item Name</span>
<div class="fin" style="left:2572px;top:708px;width:352px;height:35.5px;"></div>
<div style="left:2946px;top:645px;width:2px;height:32px;background:#c3c8cb;"></div>
<div style="left:2946px;top:711px;width:2px;height:30px;background:#c3c8cb;"></div>
<span id="h2_2" class="t" style="font-size:25px;color:#5e5f60;font-weight:400;-webkit-text-stroke:0.55px #5e5f60;left:2972.6px;top:647.96px;transform-origin:0 50%;transform:scaleX(0.9601);">UOM</span>
<div class="fin" style="left:2972px;top:708px;width:352px;height:35.5px;"></div>
<div style="left:3346px;top:645px;width:2px;height:32px;background:#c3c8cb;"></div>
<div style="left:3346px;top:711px;width:2px;height:30px;background:#c3c8cb;"></div>
<span id="h2_3" class="t" style="font-size:25px;color:#5e5f60;font-weight:400;-webkit-text-stroke:0.55px #5e5f60;right:84.30px;top:647.96px;transform-origin:100% 50%;transform:scaleX(0.9767);">Qty</span>
<div class="fin" style="left:3372px;top:708px;width:352px;height:35.5px;"></div>
<div style="left:2148px;top:758px;width:1602px;height:56px;background:#fff;"></div>
<div class="ln" style="left:2148px;top:813px;width:1602px;height:2px;"></div>
<span id="i0" class="t" style="font-size:24.5px;color:#0b0b0b;font-weight:400;left:2172.6px;top:774.62px;transform-origin:0 50%;transform:scaleX(0.8858);">ITEM ABC</span>
<span id="i1" class="t" style="font-size:24.5px;color:#0b0b0b;font-weight:400;left:2572.6px;top:774.62px;transform-origin:0 50%;transform:scaleX(0.8961);">ITEM ABC LALA</span>
<span id="i2" class="t" style="font-size:24.5px;color:#0b0b0b;font-weight:400;left:2972.6px;top:774.62px;transform-origin:0 50%;transform:scaleX(0.7938);">PCS</span>
<span id="i3" class="t" style="font-size:24.5px;color:#0b0b0b;font-weight:400;right:86.00px;top:774.62px;transform-origin:100% 50%;">1</span>
<div style="left:3750px;top:628px;width:2px;height:1003px;background:#bdc3c7;"></div>
<div style="left:3752px;top:661px;width:40px;height:2px;background:#bdc3c7;"></div>
<div style="left:3752px;top:826px;width:40px;height:3px;background:#bdc3c7;"></div>
<div style="left:3752px;top:970px;width:40px;height:2px;background:#bdc3c7;"></div>
<svg style="left:3761px;top:687px;" width="22" height="18" viewBox="0 0 22 18"><g fill="#1b1b1b"><rect x="0" y="0" width="2.300" height="17"/><rect x="6.300" y="0" width="2.300" height="17"/><rect x="12.600" y="0" width="2.300" height="17"/><rect x="18.900" y="0" width="2.300" height="17"/></g></svg>
<svg style="left:3761px;top:854px;" width="22" height="21" viewBox="0 0 22 21"><path d="M1.600 2H20.400V3.600L13.400 11V15.600L9 19V11L1.600 3.600Z" fill="none" stroke="#1b1b1b" stroke-width="2" stroke-linejoin="round"/></svg>
<span id="sc2" class="t" style="font-size:24.4px;color:#1b1b1b;font-weight:400;left:3756px;top:718px;transform-origin:0 0;transform:translate(28.5px,0) rotate(90deg) scaleX(0.9413);">Columns</span>
<span id="sf2" class="t" style="font-size:24.4px;color:#1b1b1b;font-weight:400;left:3756px;top:889px;transform-origin:0 0;transform:translate(28.5px,0) rotate(90deg) scaleX(0.8885);">Filters</span>
<div class="red" style="left:2146px;top:625px;width:1608px;height:182px;"></div>
<div style="left:3798.5px;top:241px;width:1.5px;height:1390px;background:#c4c4c4;"></div>
<div style="left:0px;top:241px;width:3808px;height:26px;background:linear-gradient(180deg,rgba(0,0,0,.30) 0%,rgba(0,0,0,.13) 35%,rgba(0,0,0,.04) 70%,rgba(0,0,0,0) 100%);"></div>
<div style="left:0px;top:113px;width:3808px;height:128px;background:#041b34;"></div>
<svg style="left:140px;top:150px;" width="54" height="50" viewBox="0 0 54 50"><g stroke-linejoin="round" stroke-width="2.400"><path d="M25.200 3.200L3 41L25.200 29.600Z" fill="#d2402a" stroke="#d2402a"/><path d="M28.600 3.200L50.600 41L28.600 29.600Z" fill="#36a65c" stroke="#36a65c"/><path d="M5.200 44.600L26.800 33L48.800 44.600Q48 46 45.500 46H8.500Q6 46 5.200 44.600Z" fill="#2677ec" stroke="#2677ec"/></g></svg>
<span id="akaun" class="t" style="font-size:54px;color:#ececec;font-weight:700;-webkit-text-stroke:0.9px #ececec;left:199.5px;top:143.94px;transform-origin:0 50%;transform:scaleX(1.0027);">akaun</span>
<svg style="left:3720px;top:138px;" width="80" height="80" viewBox="0 0 80 80"><defs><clipPath id="av"><circle cx="40" cy="40" r="40"/></clipPath><filter id="avb" x="-10%" y="-10%" width="120%" height="120%"><feGaussianBlur stdDeviation="0.900"/></filter></defs><g clip-path="url(#av)"><rect width="80" height="80" fill="#2c4320"/><g filter="url(#avb)"><circle cx="14" cy="20" r="7" fill="#44702f"/><circle cx="24" cy="9" r="6" fill="#3c6429"/><circle cx="9" cy="38" r="7" fill="#355a27"/><circle cx="21" cy="31" r="5" fill="#4d7a36"/><circle cx="17" cy="12" r="3" fill="#5f8f42"/><circle cx="8" cy="28" r="3" fill="#5a8a3e"/><circle cx="74" cy="26" r="7" fill="#44702f"/><circle cx="70" cy="10" r="6" fill="#385e28"/><circle cx="78" cy="42" r="5" fill="#3c6429"/><path d="M2.900 52.800L25.600 43.700L33.500 53.700L32.500 80H20L6 64Z" fill="#e6e2ef"/><path d="M17 60L20 66L18 74M22 62L28 60" stroke="#5b6fa8" stroke-width="1.300" fill="none"/><path d="M28 38L46 42L40 54L30 63L25.600 44Z" fill="#dfa98b"/><ellipse cx="38.300" cy="28.600" rx="10.800" ry="13.800" transform="rotate(-14 38.300 28.600)" fill="#e6b294"/><path d="M32.800 32.500Q36.500 37.500 43 35.200Q38.500 40 32.800 32.500Z" fill="#c5525c"/><path d="M33.800 33.400Q37 36.200 41.800 35Q37.500 35.600 33.800 33.400Z" fill="#fff"/><path d="M33.500 21.500L37.500 22.500M42 25.800L46 27.500" stroke="#3a2a25" stroke-width="1.300"/><path d="M28.500 24C29 15 35 7.500 43 4C52 0 63 4 69.500 14C76 24 79 40 77.500 53C76 66 66 76 55 82H32.500C31.500 72 32 62 38 52C42 47 47 44 49 38C51 30 49 22 42 18C37 17.500 32 20 28.500 24Z" fill="#1b1d22"/><path d="M50 20C56 30 58 44 54 58C52 66 50 72 50 80" stroke="#30333b" stroke-width="1.500" fill="none"/><path d="M62 18C68 30 70 46 64 62" stroke="#2b2e35" stroke-width="1.500" fill="none"/></g></g></svg>
</div>
</body>
</html>
